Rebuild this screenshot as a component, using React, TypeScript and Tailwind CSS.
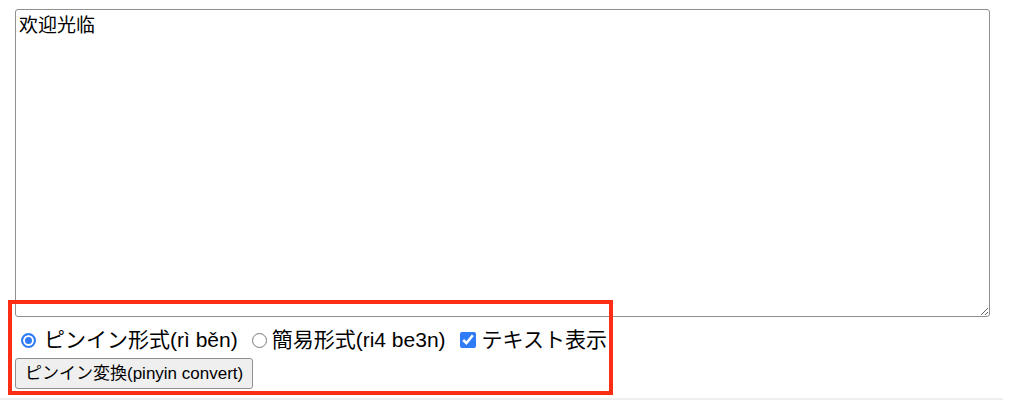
import { useState } from 'react';

const FONT = "font-['Liberation_Sans','Noto_Sans_CJK_JP',sans-serif]";

function Radio({ checked, onChange, className }: { checked: boolean; onChange: () => void; className: string }) {
  return (
    <>
      <input type="radio" name="mode" checked={checked} onChange={onChange} className="sr-only" />
      <span
        className={`block h-[15px] w-[15px] shrink-0 rounded-full ${
          checked
            ? 'border-2 border-[#2f7cf6] bg-[#2f7cf6] shadow-[inset_0_0_0_2px_white]'
            : 'border-[1.5px] border-[#7a7a7a] bg-white'
        } ${className}`}
      />
    </>
  );
}

export default function App() {
  const [text, setText] = useState('欢迎光临');
  const [mode, setMode] = useState<'tone' | 'number'>('tone');
  const [showText, setShowText] = useState(true);

  return (
    <div className={`relative h-[404px] overflow-hidden bg-white text-black ${FONT}`}>
      <div className="pl-[15px] pt-[9px]">
        <textarea
          value={text}
          onChange={e => setText(e.target.value)}
          className="block w-[975px] h-[308px] rounded-[3px] border border-[#8f8f8f] px-[3px] py-[5px] text-[19px] leading-[22px] font-['Liberation_Sans','Noto_Sans_CJK_SC',sans-serif] outline-none"
        />

        {/* options */}
        <div className="mt-[11px] flex h-[24px] items-center text-[21px] leading-[24px]">
          <label className="flex items-center">
            <Radio checked={mode === 'tone'} onChange={() => setMode('tone')} className="ml-[6px] mr-[8px]" />
            ピンイン形式(rì běn)
          </label>
          <label className="ml-[14px] flex items-center">
            <Radio checked={mode === 'number'} onChange={() => setMode('number')} className="mr-[5px]" />
            簡易形式(ri4 be3n)
          </label>
          <label className="ml-[14px] flex items-center">
            <input
              type="checkbox"
              checked={showText}
              onChange={e => setShowText(e.target.checked)}
              className="m-0 mr-[6px] h-[16px] w-[16px] shrink-0 accent-[#2f7cf6]"
            />
            テキスト表示
          </label>
        </div>

        <button className="mt-[6px] flex h-[31px] items-center rounded-[3px] border border-[#8f8f8f] bg-[#efefef] px-[9px] text-[17px] leading-none">
          ピンイン変換(pinyin convert)
        </button>
      </div>

      <div className="absolute left-0 top-[398px] h-[2px] w-[1003px] bg-[#efefef]" />

      {/* highlight frame */}
      <div className="pointer-events-none absolute left-[8px] top-[300px] h-[95px] w-[605px] border-[4px] border-[#fb2d12]" />
    </div>
  );
}
